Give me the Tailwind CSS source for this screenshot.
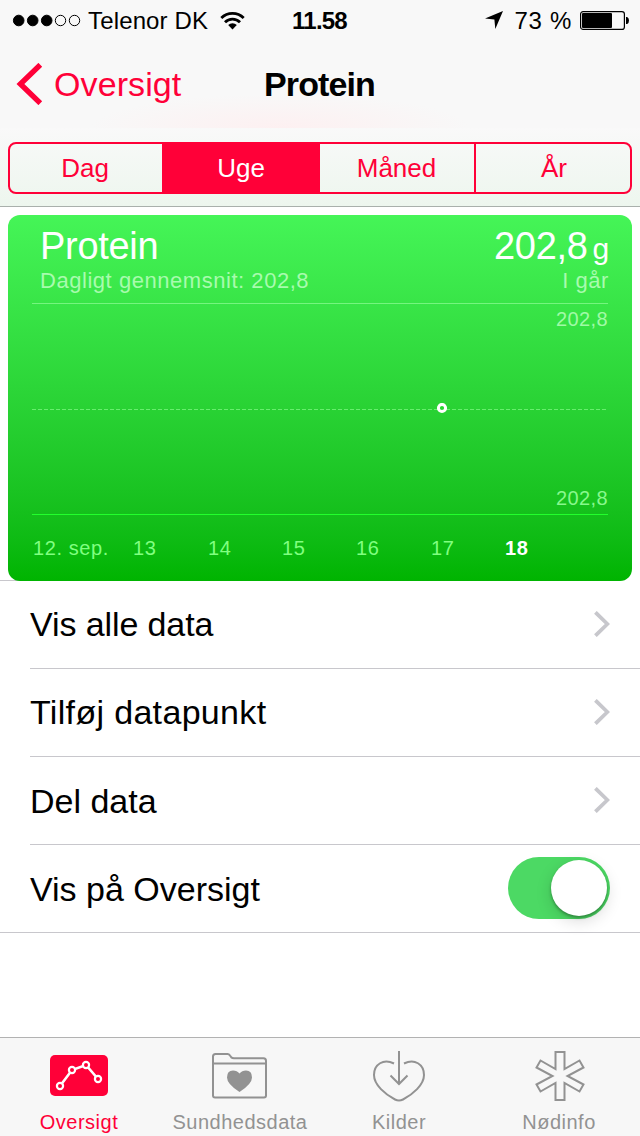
<!DOCTYPE html>
<html lang="da">
<head>
  <meta charset="UTF-8" />
  <meta name="viewport" content="width=device-width, initial-scale=1.0"/>
  <title>Protein</title>
  <script src="https://cdn.jsdelivr.net/npm/@tailwindcss/browser@4"></script>
</head>
<body class="bg-white text-black w-[640px] h-[1136px] overflow-hidden flex flex-col font-['Liberation_Sans',Arial,sans-serif]">

  <header class="h-[207px] shrink-0 flex flex-col bg-[#f8f8f8] border-b border-[#a9b0ac]">
    <!-- Status bar -->
    <div class="h-10 grid grid-cols-3 items-center pl-3 pr-[11px] text-2xl leading-[38px]">
      <div class="flex items-center whitespace-nowrap">
        <svg class="w-[70px] h-4 shrink-0" viewBox="0 0 70 16" stroke="#000">
          <circle cx="6.7" cy="8.5" r="5.3"/>
          <circle cx="20.7" cy="8.5" r="5.3"/>
          <circle cx="34.7" cy="8.5" r="5.3"/>
          <circle cx="48.5" cy="8.5" r="5.2" fill="none"/>
          <circle cx="62.5" cy="8.5" r="5.2" fill="none"/>
        </svg>
        <span class="ml-[6px] pt-[2px] tracking-[0.15px]">Telenor DK</span>
        <svg class="ml-[12px] w-[25px] h-[19px] shrink-0" viewBox="0 0 25 19" fill="none" stroke="#000" stroke-width="2.8">
          <path d="M1.3 7.1a15.8 15.8 0 0 1 22.4 0"/>
          <path d="M5 11.2a10.5 10.5 0 0 1 15 0"/>
          <path d="M12.5 18.5l-4.3-4.4a6.1 6.1 0 0 1 8.6 0z" fill="#000" stroke="none"/>
        </svg>
      </div>
      <span class="pt-[2px] pr-[2px] text-center font-bold tracking-[-0.8px]">11.58</span>
      <div class="flex items-center justify-end whitespace-nowrap">
        <svg class="w-[18px] h-[18px] mr-[11px]" viewBox="0 0 18 18"><path d="M18 0L10.3 18 9.4 8.4 0 7.5z"/></svg>
        <span class="pt-[2px] tracking-[0.7px]">73 %</span>
        <svg class="ml-[8px] w-[49px] h-[19px]" viewBox="0 0 49 19">
          <rect x=".6" y=".6" width="43.8" height="17.8" rx="2.5" fill="none" stroke="#000" stroke-width="1.2"/>
          <rect x="2" y="2" width="30" height="15" rx="1"/>
          <path d="M46 6h1.2q1.8 1.2 1.8 3.5t-1.8 3.5H46z"/>
        </svg>
      </div>
    </div>

    <!-- Title bar -->
    <div class="h-[88px] grid grid-cols-3 items-center px-4 text-[34px] bg-[radial-gradient(ellipse_190px_34px_at_280px_88px,#fdf0f1,#f8f8f8)]">
      <a class="flex items-center text-[#ff0038]">
        <svg class="w-[27px] h-[42px]" viewBox="0 0 27 42" fill="none" stroke="currentColor" stroke-width="5.4"><path d="M24.3 1.8L4.4 21l19.9 19.2"/></svg>
        <span class="ml-[11px] tracking-[0.1px]">Oversigt</span>
      </a>
      <h1 class="pr-px text-center font-bold tracking-[-0.9px]">Protein</h1>
    </div>

    <!-- Period picker -->
    <div class="grow px-2 pt-[14px] bg-linear-to-b from-[#f9f9f9] to-[#edf6ee]">
      <div class="h-[52px] flex border-2 border-[#ff0038] rounded-lg overflow-hidden text-[26px] leading-[48px] text-center text-[#ff0038]">
        <div class="w-[152px] pr-[2px]">Dag</div>
        <div class="w-[158px] bg-[#ff0038] text-white">Uge</div>
        <div class="w-[156px] pr-px border-r-2 border-[#ff0038]">Måned</div>
        <div class="grow pl-[2px]">År</div>
      </div>
    </div>
  </header>

  <main class="grow">
    <div class="relative h-[374px] px-2 pt-2">
      <div class="absolute left-0 bottom-0 w-[30px] h-px bg-[#c8c7cc]"></div>
      <section class="relative h-[366px] rounded-[12px] px-6 bg-linear-to-b from-[#45f557] to-[#00b400] text-white">
        <div class="h-[89px] pl-2 pt-[9px] border-b border-[#75f57f]">
          <div class="flex justify-between items-baseline h-[45px] text-[38px] leading-[44px]">
            <h2 class="tracking-[-0.3px]">Protein</h2>
            <p class="-mr-px tracking-[-0.3px]">202,8<span class="ml-[5px] text-[30px]">g</span></p>
          </div>
          <div class="flex justify-between text-[22px] leading-6 tracking-[0.54px] text-[#a8fbae]">
            <span>Dagligt gennemsnit: 202,8</span>
            <span class="-mr-px">I går</span>
          </div>
        </div>
        <div class="relative h-[210px] flex flex-col justify-between items-end pt-[3px] pb-1 text-xl leading-6 tracking-[0.4px] text-[#88f88d]">
          <span class="text-[#a0faa6]">202,8</span>
          <span>202,8</span>
          <svg class="absolute left-0 top-[99px] w-[576px] h-3" viewBox="0 0 576 12">
            <path d="M0 6.5H574" stroke="#67ef6d" stroke-dasharray="4 2"/>
            <circle cx="410" cy="5" r="3.6" fill="#25d72e" stroke="#fff" stroke-width="3"/>
          </svg>
        </div>
        <div class="h-px bg-[#22ff2c]"></div>
        <div class="flex pt-[21px] text-xl leading-6 tracking-[0.6px] text-[#80ff80]">
          <span class="w-[101px] pl-px">12. sep.</span>
          <span class="w-[75px]">13</span>
          <span class="w-[74px]">14</span>
          <span class="w-[74px]">15</span>
          <span class="w-[75px]">16</span>
          <span class="w-[74px]">17</span>
          <span class="font-bold text-white">18</span>
        </div>
      </section>
    </div>

    <ul class="text-[34px] border-b border-[#c8c7cc]">
      <li class="ml-[30px] pr-[30px] h-[88px] flex items-center justify-between border-b border-[#c8c7cc]">
        <span class="tracking-[-0.1px]">Vis alle data</span>
        <svg class="w-4 h-[26px] mb-[2px]" viewBox="0 0 16 26" fill="none" stroke="#c7c7cc" stroke-width="3.8"><path d="M1.4 1.3L13.4 13 1.4 24.7"/></svg>
      </li>
      <li class="ml-[30px] pr-[30px] h-[88px] flex items-center justify-between border-b border-[#c8c7cc]">
        <span class="tracking-[0.33px]">Tilføj datapunkt</span>
        <svg class="w-4 h-[26px] mb-[2px]" viewBox="0 0 16 26" fill="none" stroke="#c7c7cc" stroke-width="3.8"><path d="M1.4 1.3L13.4 13 1.4 24.7"/></svg>
      </li>
      <li class="ml-[30px] pr-[30px] h-[88px] flex items-center justify-between border-b border-[#c8c7cc]">
        <span class="pt-[2px]">Del data</span>
        <svg class="w-4 h-[26px] mb-[2px]" viewBox="0 0 16 26" fill="none" stroke="#c7c7cc" stroke-width="3.8"><path d="M1.4 1.3L13.4 13 1.4 24.7"/></svg>
      </li>
      <li class="ml-[30px] pr-[30px] h-[87px] flex items-center justify-between">
        <span class="pt-[2px]">Vis på Oversigt</span>
        <div class="w-[102px] h-[62px] mb-[2px] rounded-full bg-[#4cd964] flex items-center justify-end pr-[3px]">
          <div class="size-14 rounded-full bg-white shadow-[0_2px_3px_rgba(0,0,0,0.3),0_5px_16px_rgba(0,0,0,0.15)]"></div>
        </div>
      </li>
    </ul>
  </main>

  <!-- Tab bar -->
  <nav class="h-[99px] shrink-0 grid grid-cols-4 bg-[#f7f7f7] border-t border-[#b2b2b2] text-xl leading-6 tracking-[0.5px] text-center text-[#929292]">
    <a class="flex flex-col items-center pt-[9px] pr-[2px] text-[#ff0038]">
      <svg class="w-[60px] h-[63px]" viewBox="0 0 60 63" fill="none">
        <rect x="1" y="8" width="58" height="41" rx="5" fill="currentColor"/>
        <path d="M11 39L23 23 37 18 49 32" stroke="#fff" stroke-width="2.6"/>
        <g fill="currentColor" stroke="#fff" stroke-width="2.2">
          <circle cx="11" cy="39" r="3.1"/>
          <circle cx="23" cy="23" r="3.1"/>
          <circle cx="37" cy="18" r="3.1"/>
          <circle cx="49" cy="32" r="3.1"/>
        </g>
      </svg>
      <span>Oversigt</span>
    </a>
    <a class="flex flex-col items-center pt-[9px]">
      <svg class="w-[60px] h-[63px]" viewBox="0 0 60 63" fill="none" stroke="currentColor" stroke-width="2">
        <path d="M3 48.5V9.5Q3 7 5.5 7H17.5Q19 7 20 8.5L21.5 10.5Q22.2 11.3 24 11.3H53.5Q56 11.3 56 14V48.5Q56 50.500 54 50.500H5Q3 50.500 3 48.5zM3 16.5H56"/>
        <path d="M29.5 45Q17 37 17 30.5Q17 23.5 23 23.5Q27 23.5 29.5 26.5Q32 23.5 36 23.5Q42 23.5 42 30.5Q42 37 29.5 45z" fill="currentColor" stroke="none"/>
      </svg>
      <span>Sundhedsdata</span>
    </a>
    <a class="flex flex-col items-center pt-[9px] pr-[2px]">
      <svg class="w-[60px] h-[63px]" viewBox="-0.5 0 60 63" fill="none" stroke="currentColor" stroke-width="2">
        <path d="M24.5 16.500C14 11.500 4.5 17 4.5 28C4.5 38 16 47.5 25.5 52.5Q29.5 54.5 33.5 52.5C43 47.5 54.500 38 54.500 28C54.5 17 45 11.5 34.5 16.5"/>
        <path d="M29.5 4V36.5M21 28.5L29.5 37l8.5-8.5"/>
      </svg>
      <span>Kilder</span>
    </a>
    <a class="flex flex-col items-center pt-[9px] pr-[2px]">
      <svg class="w-[60px] h-[63px]" viewBox="-0.5 0 60 63" fill="none" stroke="currentColor" stroke-width="2">
        <path d="M26 5H35V22L50 13.5 54 20.5 38 29 54 37.5 50 44.5 35 36V53H26V36L11 44.5 7 37.5 23 29 7 20.5 11 13.5 26 22z"/>
      </svg>
      <span>Nødinfo</span>
    </a>
  </nav>
</body>
</html>
